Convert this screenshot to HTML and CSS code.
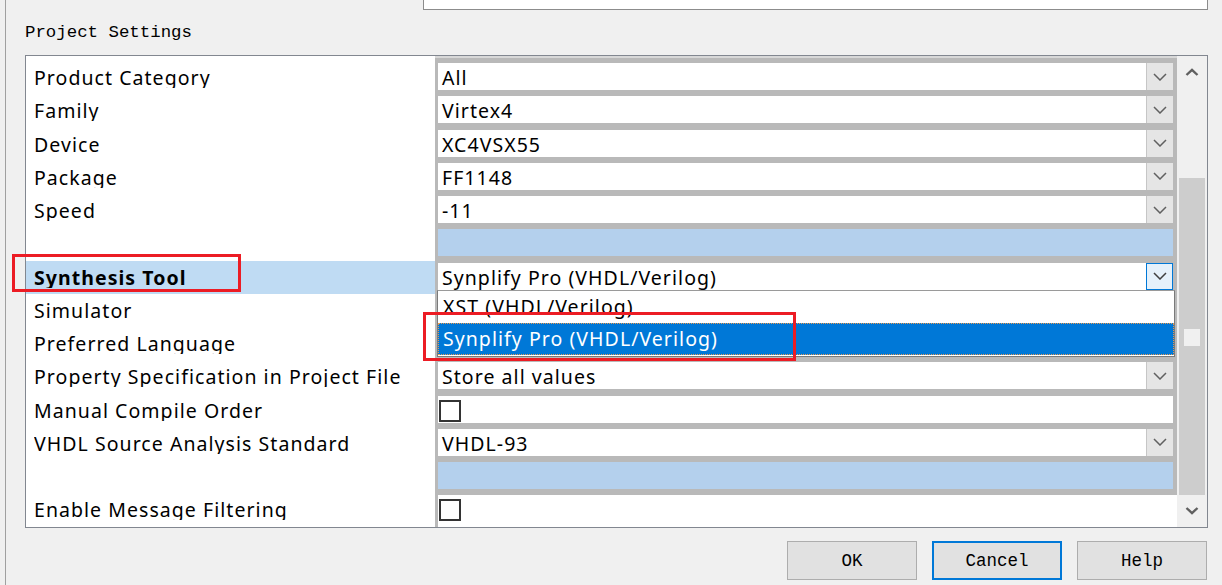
FILE: index.html
```html
<!DOCTYPE html>
<html>
<head>
<meta charset="utf-8">
<link rel="stylesheet" href="styles.css">
</head>
<body>
<div class="dialog">
  <div class="top-box"></div>
  <div class="group-label">Project Settings</div>
  <div class="frame">
    <div class="grid">
      <div class="lbl spacer"></div><div class="val spacer"></div>

      <div class="lbl"><span>Product Category</span></div>
      <div class="val"><div class="combo"><span class="txt">All</span><span class="btn"><svg width="14" height="8" viewBox="0 0 14 8"><polyline points="1,1 7,7 13,1" fill="none" stroke="#606060" stroke-width="1.5"/></svg></span></div></div>

      <div class="lbl"><span>Family</span></div>
      <div class="val"><div class="combo"><span class="txt">Virtex4</span><span class="btn"><svg width="14" height="8" viewBox="0 0 14 8"><polyline points="1,1 7,7 13,1" fill="none" stroke="#606060" stroke-width="1.5"/></svg></span></div></div>

      <div class="lbl"><span>Device</span></div>
      <div class="val"><div class="combo"><span class="txt">XC4VSX55</span><span class="btn"><svg width="14" height="8" viewBox="0 0 14 8"><polyline points="1,1 7,7 13,1" fill="none" stroke="#606060" stroke-width="1.5"/></svg></span></div></div>

      <div class="lbl"><span>Package</span></div>
      <div class="val"><div class="combo"><span class="txt">FF1148</span><span class="btn"><svg width="14" height="8" viewBox="0 0 14 8"><polyline points="1,1 7,7 13,1" fill="none" stroke="#606060" stroke-width="1.5"/></svg></span></div></div>

      <div class="lbl"><span>Speed</span></div>
      <div class="val"><div class="combo"><span class="txt">-11</span><span class="btn"><svg width="14" height="8" viewBox="0 0 14 8"><polyline points="1,1 7,7 13,1" fill="none" stroke="#606060" stroke-width="1.5"/></svg></span></div></div>

      <div class="lbl"><span></span></div>
      <div class="val"><div class="combo blue"></div></div>

      <div class="lbl selected"><span>Synthesis Tool</span></div>
      <div class="val"><div class="combo"><span class="txt">Synplify Pro (VHDL/Verilog)</span><span class="btn active"><svg width="14" height="8" viewBox="0 0 14 8"><polyline points="1,1 7,7 13,1" fill="none" stroke="#404040" stroke-width="1.5"/></svg></span></div></div>

      <div class="lbl"><span>Simulator</span></div>
      <div class="val"><div class="combo"></div></div>

      <div class="lbl"><span>Preferred Language</span></div>
      <div class="val"><div class="combo"></div></div>

      <div class="lbl"><span>Property Specification in Project File</span></div>
      <div class="val"><div class="combo"><span class="txt">Store all values</span><span class="btn"><svg width="14" height="8" viewBox="0 0 14 8"><polyline points="1,1 7,7 13,1" fill="none" stroke="#606060" stroke-width="1.5"/></svg></span></div></div>

      <div class="lbl"><span>Manual Compile Order</span></div>
      <div class="val"><div class="combo"><span class="check"></span></div></div>

      <div class="lbl"><span>VHDL Source Analysis Standard</span></div>
      <div class="val"><div class="combo"><span class="txt">VHDL-93</span><span class="btn"><svg width="14" height="8" viewBox="0 0 14 8"><polyline points="1,1 7,7 13,1" fill="none" stroke="#606060" stroke-width="1.5"/></svg></span></div></div>

      <div class="lbl"><span></span></div>
      <div class="val"><div class="combo blue"></div></div>

      <div class="lbl"><span>Enable Message Filtering</span></div>
      <div class="val last"><div class="combo"><span class="check"></span></div></div>

      <div class="lbl filler"></div><div class="val filler"></div>
    </div>
    <div class="scrollbar">
      <div class="sb-btn"><svg width="14" height="8" viewBox="0 0 14 8"><polyline points="1.5,7 7,1.8 12.5,7" fill="none" stroke="#606060" stroke-width="2.4"/></svg></div>
      <div class="sb-track"><div class="thumb"><span class="thumb-mark"></span></div></div>
      <div class="sb-btn"><svg width="14" height="8" viewBox="0 0 14 8"><polyline points="1.5,1 7,6.2 12.5,1" fill="none" stroke="#606060" stroke-width="2.4"/></svg></div>
    </div>
  </div>
  <div class="buttons">
    <div class="button">OK</div>
    <div class="button default">Cancel</div>
    <div class="button">Help</div>
  </div>
</div>

<div class="dropdown">
  <div class="item">XST (VHDL/Verilog)</div>
  <div class="item sel">Synplify Pro (VHDL/Verilog)</div>
</div>
<div class="mark mark-a"></div>
<div class="mark mark-b"></div>
</body>
</html>
```
FILE: styles.css
```css
* { box-sizing: border-box; }
html, body { margin: 0; padding: 0; }
body {
  width: 1222px;
  height: 585px;
  overflow: hidden;
  background: #f0f0f0;
  font-family: "Noto Sans", sans-serif;
  color: #000;
  position: relative;
}
.dialog {
  height: 585px;
  margin-left: 5px;
  border-left: 1px solid #a0a0a0;
  padding-left: 19px;
}
.top-box {
  margin-left: 398px;
  width: 785px;
  height: 10px;
  background: #fff;
  border: 1px solid #8c8c8c;
  border-top: none;
}
.group-label {
  margin-top: 13px;
  margin-bottom: 12px;
  height: 20px;
  line-height: 20px;
  font-family: "Liberation Mono", monospace;
  font-size: 17.4px;
}
.frame {
  width: 1183px;
  height: 473px;
  border: 1px solid #828790;
  display: flex;
  background: #fff;
}
.grid {
  width: 1151px;
  display: grid;
  grid-template-columns: 409px 742px;
  grid-template-rows: 7px repeat(14, 33.25px) 1fr;
  overflow: hidden;
}
.lbl {
  background: #fff;
  padding-left: 8px;
  font-size: 19.5px;
  letter-spacing: 1.05px;
}
.lbl span {
  display: block;
  height: 25px;
  line-height: 29px;
  overflow: hidden;
  white-space: nowrap;
}
.lbl.selected {
  background: #bfdbf3;
  font-weight: bold;
  margin: -2px 0 2px;
  padding-top: 2px;
}
.val {
  background: #b9b9b9;
  padding: 0 4px 0 3px;
}
.val.spacer { padding: 0; background: linear-gradient(#d8d8d8 0 2px, #b9b9b9 2px); }
.val.last { background: linear-gradient(to right, #b9b9b9 0 3px, #fff 3px); }
.val.filler { background: linear-gradient(to right, #b9b9b9 0 3px, #fff 3px); padding: 0; }
.combo {
  height: 27px;
  background: #fff;
  display: flex;
  align-items: stretch;
  font-size: 19.5px;
  letter-spacing: 1.05px;
  line-height: 29px;
}
.combo.blue { background: #b4d0ed; }
.txt {
  flex: 1;
  padding-left: 4px;
  white-space: nowrap;
  overflow: hidden;
}
.btn {
  width: 27px;
  background: #e5e5e5;
  border-left: 1px solid #c6c6c6;
  display: flex;
  align-items: center;
  justify-content: center;
}
.btn.active {
  background: #e5f1fb;
  border: 1px solid #0078d7;
}
.check {
  width: 22px;
  height: 22px;
  border: 2px solid #333;
  background: #fff;
  margin: 4px 0 0 1px;
}
.scrollbar {
  width: 30px;
  background: #f0f0f0;
  display: flex;
  flex-direction: column;
}
.sb-btn {
  height: 32px;
  display: flex;
  align-items: center;
  justify-content: center;
}
.sb-track {
  flex: 1;
  padding: 90px 2px 0 2px;
}
.thumb {
  height: 317px;
  background: #cdcdcd;
  position: relative;
}
.thumb-mark {
  position: absolute;
  left: 5px;
  top: 151px;
  width: 16px;
  height: 17px;
  background: #f0f0f0;
}
.buttons {
  width: 1183px;
  margin-top: 13px;
  display: flex;
  justify-content: flex-end;
  gap: 15px;
  padding-right: 1px;
}
.button {
  width: 130px;
  height: 39px;
  background: #e1e1e1;
  border: 1px solid #adadad;
  display: flex;
  align-items: center;
  justify-content: center;
  font-family: "Liberation Mono", monospace;
  font-size: 17.5px;
}
.button.default { border: 2px solid #0078d7; }
.dropdown {
  position: absolute;
  left: 437px;
  top: 290px;
  width: 738px;
  height: 67px;
  background: #fff;
  border: 1px solid #7a7a7a;
  border-top-color: #9a9a9a;
  font-size: 19.5px;
  letter-spacing: 1.05px;
}
.item {
  height: 32px;
  line-height: 31px;
  padding-left: 5px;
  white-space: nowrap;
}
.item.sel {
  background: #0078d7;
  color: #fff;
  outline: 1px dotted #e89a50;
  outline-offset: -1px;
}
.mark {
  position: absolute;
  border: 3px solid #ec1c24;
}
.mark-a { left: 12px; top: 254px; width: 229px; height: 38px; }
.mark-b { left: 423px; top: 312px; width: 373px; height: 49px; }
```
